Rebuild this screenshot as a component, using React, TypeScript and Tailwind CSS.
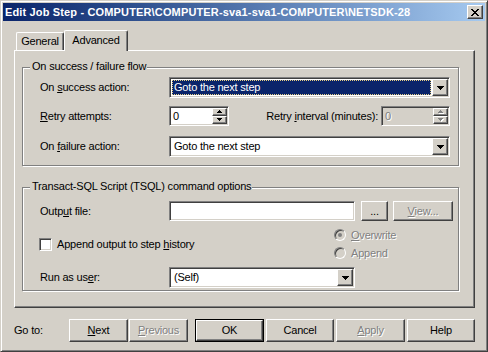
import React from "react";

const raised =
  "border border-t-white border-l-white border-r-[#404040] border-b-[#404040] shadow-[inset_-1px_-1px_0_#808080,inset_1px_1px_0_#d4d0c8]";
const sunken =
  "border border-t-[#808080] border-l-[#808080] border-r-white border-b-white shadow-[inset_1px_1px_0_#404040,inset_-1px_-1px_0_#d4d0c8]";
const disabledText = "text-[#808080] [text-shadow:1px_1px_0_#ffffff]";

function DownArrow({ color = "#000000" }: { color?: string }) {
  return (
    <svg width="7" height="4" viewBox="0 0 7 4" shapeRendering="crispEdges">
      <rect x="0" y="0" width="7" height="1" fill={color} />
      <rect x="1" y="1" width="5" height="1" fill={color} />
      <rect x="2" y="2" width="3" height="1" fill={color} />
      <rect x="3" y="3" width="1" height="1" fill={color} />
    </svg>
  );
}

function SmallArrow({ up, disabled }: { up?: boolean; disabled?: boolean }) {
  const c = disabled ? "#808080" : "#000000";
  const rows = up
    ? [
        [2, 0, 1],
        [1, 1, 3],
        [0, 2, 5],
      ]
    : [
        [0, 0, 5],
        [1, 1, 3],
        [2, 2, 1],
      ];
  return (
    <svg width="6" height="4" viewBox="0 0 6 4" shapeRendering="crispEdges">
      {disabled &&
        rows.map(([x, y, w], i) => (
          <rect key={"s" + i} x={x + 1} y={y + 1} width={w} height={1} fill="#ffffff" />
        ))}
      {rows.map(([x, y, w], i) => (
        <rect key={i} x={x} y={y} width={w} height={1} fill={c} />
      ))}
    </svg>
  );
}

function CloseX() {
  const px: [number, number, number][] = [
    [0, 0, 2],
    [6, 0, 2],
    [1, 1, 2],
    [5, 1, 2],
    [2, 2, 4],
    [3, 3, 2],
    [2, 4, 4],
    [1, 5, 2],
    [5, 5, 2],
    [0, 6, 2],
    [6, 6, 2],
  ];
  return (
    <svg width="8" height="7" viewBox="0 0 8 7" shapeRendering="crispEdges">
      {px.map(([x, y, w], i) => (
        <rect key={i} x={x} y={y} width={w} height={1} fill="#000000" />
      ))}
    </svg>
  );
}

function U({ children }: { children: React.ReactNode }) {
  return <span className="underline underline-offset-[1px]">{children}</span>;
}

function Combo({
  className,
  value,
  highlighted,
}: {
  className: string;
  value: string;
  highlighted?: boolean;
}) {
  return (
    <div className={`${sunken} bg-white flex p-[1px] h-[21px] ${className}`}>
      <div className="flex-1 flex p-[1px] min-w-0">
        {highlighted ? (
          <div className="flex-1 flex items-center bg-[#0a246a] text-white border border-dotted border-[#e6cf85] pl-[1px] whitespace-nowrap">
            {value}
          </div>
        ) : (
          <div className="flex-1 flex items-center pl-[2px] whitespace-nowrap">{value}</div>
        )}
      </div>
      <div className={`${raised} w-[16px] bg-[#d4d0c8] flex items-center justify-center`}>
        <DownArrow />
      </div>
    </div>
  );
}

function Spin({ className, value, disabled }: { className: string; value: string; disabled?: boolean }) {
  return (
    <div className={`${sunken} ${disabled ? "bg-[#d4d0c8]" : "bg-white"} flex p-[1px] h-[20px] ${className}`}>
      <div className={`flex-1 flex items-center pl-[2px] ${disabled ? disabledText : ""}`}>{value}</div>
      <div className="flex flex-col w-[15px]">
        <div className={`${raised} flex-1 bg-[#d4d0c8] flex items-center justify-center`}>
          <SmallArrow up disabled={disabled} />
        </div>
        <div className={`${raised} flex-1 bg-[#d4d0c8] flex items-center justify-center`}>
          <SmallArrow disabled={disabled} />
        </div>
      </div>
    </div>
  );
}

function Btn({
  children,
  className,
  isDefault,
  disabled,
}: {
  children: React.ReactNode;
  className: string;
  isDefault?: boolean;
  disabled?: boolean;
}) {
  const inner = (
    <div
      className={`${raised} flex-1 bg-[#d4d0c8] flex items-center justify-center ${
        disabled ? disabledText : ""
      }`}
    >
      {children}
    </div>
  );
  if (isDefault) {
    return <div className={`border border-black flex ${className}`}>{inner}</div>;
  }
  return <div className={`flex ${className}`}>{inner}</div>;
}

function Radio({ checked }: { checked?: boolean }) {
  return (
    <div className="w-[12px] h-[12px] rounded-full border border-t-[#808080] border-l-[#808080] border-r-white border-b-white shadow-[inset_1px_1px_0_#404040] bg-[#d4d0c8] flex items-center justify-center">
      {checked && <div className="w-[4px] h-[4px] rounded-full bg-[#808080]" />}
    </div>
  );
}

function Group({
  title,
  className,
  children,
}: {
  title: string;
  className: string;
  children: React.ReactNode;
}) {
  return (
    <div
      className={`relative border border-[#808080] shadow-[1px_1px_0_#ffffff,inset_1px_1px_0_#ffffff] ${className}`}
    >
      <span className="absolute left-[7px] top-[-8px] pl-[2px] pr-[1px] bg-[#d4d0c8] leading-[13px] whitespace-nowrap">
        {title}
      </span>
      {children}
    </div>
  );
}

export default function App() {
  return (
    <div className="w-[488px] h-[352px] bg-[#d4d0c8] border border-t-[#d4d0c8] border-l-[#d4d0c8] border-r-[#404040] border-b-[#404040] shadow-[inset_1px_1px_0_#ffffff,inset_-1px_-1px_0_#808080] p-[2px] flex flex-col text-[11px] leading-[13px] tracking-[-0.2px] text-black font-['Liberation_Sans',Arial,sans-serif] overflow-hidden">
      {/* Title bar */}
      <div className="h-[18px] flex items-center bg-linear-to-r from-[#0a246a] to-[#a6caf0] pl-[2px] pr-[2px] shrink-0">
        <span className="flex-1 text-white font-bold text-[11px] tracking-[0.15px] whitespace-nowrap">
          {"Edit Job Step - COMPUTER\\COMPUTER-sva1-sva1-COMPUTER\\NETSDK-28"}
        </span>
        <div className={`${raised} w-[16px] h-[14px] bg-[#d4d0c8] flex items-center justify-center`}>
          <CloseX />
        </div>
      </div>

      {/* Tabs + panel */}
      <div className="pl-[11px] mt-[9px] flex flex-col">
        <div className="h-[20px] flex items-end">
          <div className="ml-[2px] w-[48px] h-[18px] border-t border-l border-r border-t-white border-l-white border-r-[#404040] shadow-[inset_-1px_0_0_#808080] rounded-tl-[2px] rounded-tr-[2px] flex items-center justify-center">
            General
          </div>
          <div className="relative z-10 w-[64px] h-[21px] mb-[-1px] bg-[#d4d0c8] border-t border-l border-r border-t-white border-l-white border-r-[#404040] shadow-[inset_-1px_0_0_#808080] rounded-tl-[2px] rounded-tr-[2px] flex items-start justify-center pt-[3px]">
            Advanced
          </div>
        </div>
        <div className="w-[461px] h-[258px] border border-t-white border-l-white border-r-[#404040] border-b-[#404040] shadow-[inset_-1px_-1px_0_#808080] pt-[16px] pl-[7px] flex flex-col">
          {/* Group 1 */}
          <Group title="On success / failure flow" className="w-[437px] h-[99px] pt-[9px] pl-[17px] flex flex-col">
            <div className="flex items-center h-[21px]">
              <div className="w-[129px]">
                On <U>s</U>uccess action:
              </div>
              <Combo className="w-[281px]" value="Goto the next step" highlighted />
            </div>
            <div className="flex items-center h-[20px] mt-[8px]">
              <div className="w-[129px]">
                <U>R</U>etry attempts:
              </div>
              <Spin className="w-[60px]" value="0" />
              <div className="w-[152px] text-right pr-[3px] whitespace-nowrap">
                Retry <U>i</U>nterval (minutes):
              </div>
              <Spin className="w-[69px]" value="0" disabled />
            </div>
            <div className="flex items-center h-[21px] mt-[10px]">
              <div className="w-[129px]">
                On <U>f</U>ailure action:
              </div>
              <Combo className="w-[281px]" value="Goto the next step" />
            </div>
          </Group>

          {/* Group 2 */}
          <Group
            title="Transact-SQL Script (TSQL) command options"
            className="w-[437px] h-[104px] mt-[21px] pt-[13px] pl-[17px] flex flex-col"
          >
            <div className="flex items-center h-[20px]">
              <div className="w-[129px]">
                Outp<U>u</U>t file:
              </div>
              <div className={`${sunken} bg-white w-[186px] h-[20px]`} />
              <Btn className="w-[27px] h-[20px] ml-[6px]">...</Btn>
              <Btn className="w-[60px] h-[20px] ml-[5px]" disabled>
                <span>
                  <U>V</U>iew...
                </span>
              </Btn>
            </div>
            <div className="flex h-[31px] mt-[8px]">
              <div className="w-[295px] flex items-center ml-[-1px]">
                <div className={`${sunken} bg-white w-[13px] h-[13px]`} />
                <span className="ml-[5px]">
                  Append output to step <U>h</U>istory
                </span>
              </div>
              <div className="flex flex-col gap-[6px]">
                <div className="flex items-center h-[12px]">
                  <Radio checked />
                  <span className={`ml-[5px] ${disabledText}`}>
                    <U>O</U>verwrite
                  </span>
                </div>
                <div className="flex items-center h-[12px]">
                  <Radio />
                  <span className={`ml-[5px] ${disabledText}`}>Append</span>
                </div>
              </div>
            </div>
            <div className="flex items-center h-[21px] mt-[7px]">
              <div className="w-[129px]">
                Run as us<U>e</U>r:
              </div>
              <Combo className="w-[186px]" value="(Self)" />
            </div>
          </Group>
        </div>
      </div>

      {/* Bottom buttons */}
      <div className="flex items-center h-[23px] mt-[11px]">
        <div className="ml-[11px] w-[55px]">Go to:</div>
        <Btn className="w-[59px] h-[23px]">
          <span>
            <U>N</U>ext
          </span>
        </Btn>
        <Btn className="w-[59px] h-[23px] ml-[1px]" disabled>
          <span>
            <U>P</U>revious
          </span>
        </Btn>
        <Btn className="w-[69px] h-[23px] ml-[7px]" isDefault>
          OK
        </Btn>
        <Btn className="w-[68px] h-[23px] ml-[2px]">Cancel</Btn>
        <Btn className="w-[69px] h-[23px] ml-[2px]" disabled>
          <span>
            <U>A</U>pply
          </span>
        </Btn>
        <Btn className="w-[68px] h-[23px] ml-[2px]">Help</Btn>
      </div>
    </div>
  );
}
